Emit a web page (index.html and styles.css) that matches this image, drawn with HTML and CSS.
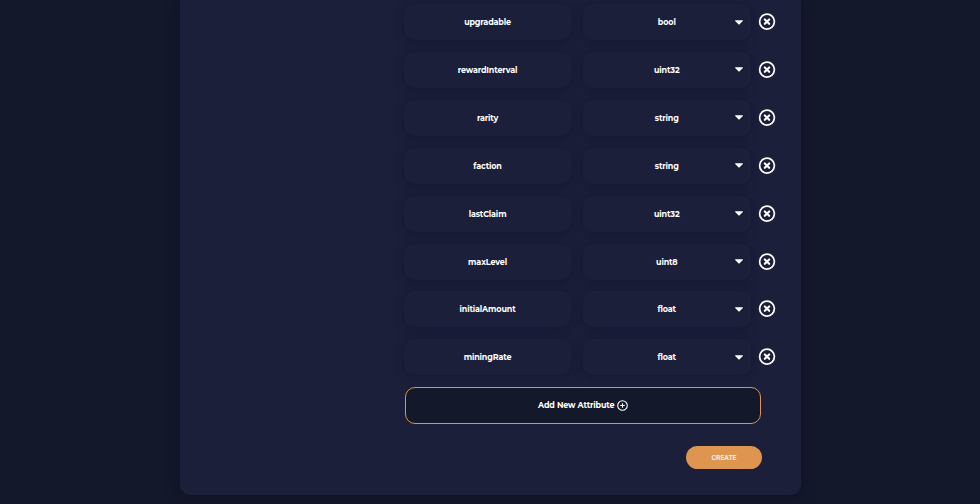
FILE: index.html
```html
<!DOCTYPE html>
<html lang="en">
<head>
<meta charset="utf-8">
<title>Attributes</title>
<link rel="stylesheet" href="styles.css">
</head>
<body>
<svg class="defs" aria-hidden="true">
  <symbol id="remove" viewBox="0 0 18 18"><circle cx="9" cy="9" r="7.4" fill="none" stroke="currentColor" stroke-width="1.75"/><path d="M6.8 6.8 11.2 11.2M11.2 6.8 6.8 11.2" fill="none" stroke="currentColor" stroke-width="2.1" stroke-linecap="round"/></symbol>
  <symbol id="caret" viewBox="0 0 8 5"><path d="M.4.3h7.2q.6.1.2.6L4.6 4.2q-.6.5-1.2 0L.2.9Q-.2.4.4.3Z" fill="currentColor"/></symbol>
</svg>
<main class="card">
  <div class="rows">
    <div class="row"><div class="field">upgradable</div><div class="field">bool<svg class="caret"><use href="#caret"/></svg></div><svg class="remove"><use href="#remove"/></svg></div>
    <div class="row"><div class="field">rewardInterval</div><div class="field">uint32<svg class="caret"><use href="#caret"/></svg></div><svg class="remove"><use href="#remove"/></svg></div>
    <div class="row"><div class="field">rarity</div><div class="field">string<svg class="caret"><use href="#caret"/></svg></div><svg class="remove"><use href="#remove"/></svg></div>
    <div class="row"><div class="field">faction</div><div class="field">string<svg class="caret"><use href="#caret"/></svg></div><svg class="remove"><use href="#remove"/></svg></div>
    <div class="row"><div class="field">lastClaim</div><div class="field">uint32<svg class="caret"><use href="#caret"/></svg></div><svg class="remove"><use href="#remove"/></svg></div>
    <div class="row"><div class="field">maxLevel</div><div class="field">uint8<svg class="caret"><use href="#caret"/></svg></div><svg class="remove"><use href="#remove"/></svg></div>
    <div class="row"><div class="field">initialAmount</div><div class="field">float<svg class="caret"><use href="#caret"/></svg></div><svg class="remove"><use href="#remove"/></svg></div>
    <div class="row"><div class="field">miningRate</div><div class="field">float<svg class="caret"><use href="#caret"/></svg></div><svg class="remove"><use href="#remove"/></svg></div>
  </div>
  <button class="add">Add New Attribute<svg class="plus" viewBox="0 0 11 11"><circle cx="5.5" cy="5.5" r="4.8"/><path d="M5.5 3.2v4.6M3.2 5.5h4.6"/></svg></button>
  <button class="create">CREATE</button>
</main>
</body>
</html>
```
FILE: styles.css
```css
* { box-sizing: border-box; }
body {
  margin: 0;
  height: 504px;
  overflow: hidden;
  background: #14182b;
  color: #fff;
  font-family: Montserrat, Inter, sans-serif;
  font-size: 8px;
  font-weight: 700;
  letter-spacing: -.14px;
}
.defs { display: none; }
.card {
  width: 620.7px;
  height: 495px;
  margin-left: 180px;
  padding: 4px 25px 0 223.6px;
  display: flex;
  flex-direction: column;
  background: #1b1f3a;
  border-radius: 0 0 10px 10px;
  box-shadow: 0 2px 14px rgba(12, 14, 28, .6);
}
.rows { display: flex; flex-direction: column; gap: 11.92px; }
.row { display: flex; align-items: center; height: 36px; }
.field {
  position: relative;
  display: flex;
  align-items: center;
  justify-content: center;
  width: 168px;
  height: 36px;
  border-radius: 10px;
  background: #1b1f3a;
  box-shadow: 0 1px 10px rgba(18, 21, 52, .75);
}
.field + .field { margin-left: 11.4px; }
.caret { position: absolute; right: 7.8px; top: 15.5px; width: 8px; height: 5px; }
.remove { width: 18px; height: 18px; margin-left: 7px; flex: none; transform: translateY(-.4px); }
button { font: inherit; color: inherit; padding: 0; letter-spacing: inherit; }
.add {
  display: flex;
  align-items: center;
  justify-content: center;
  gap: 2.5px;
  width: 356px;
  height: 37px;
  margin: 11.6px 0 0 1.4px;
  border: 1px solid #dc9450;
  border-radius: 10px;
  background: #14182b;
}
.plus { width: 11px; height: 11px; fill: none; stroke: #fff; stroke-width: 1.1; }
.create {
  width: 76.5px;
  height: 23px;
  margin: 22.4px 0 0 282.2px;
  border: 0;
  border-radius: 12px;
  background: #dd9550;
  color: #fbeee2;
  font-family: Roboto, sans-serif;
  font-size: 6.8px;
  letter-spacing: 0;
}
```
